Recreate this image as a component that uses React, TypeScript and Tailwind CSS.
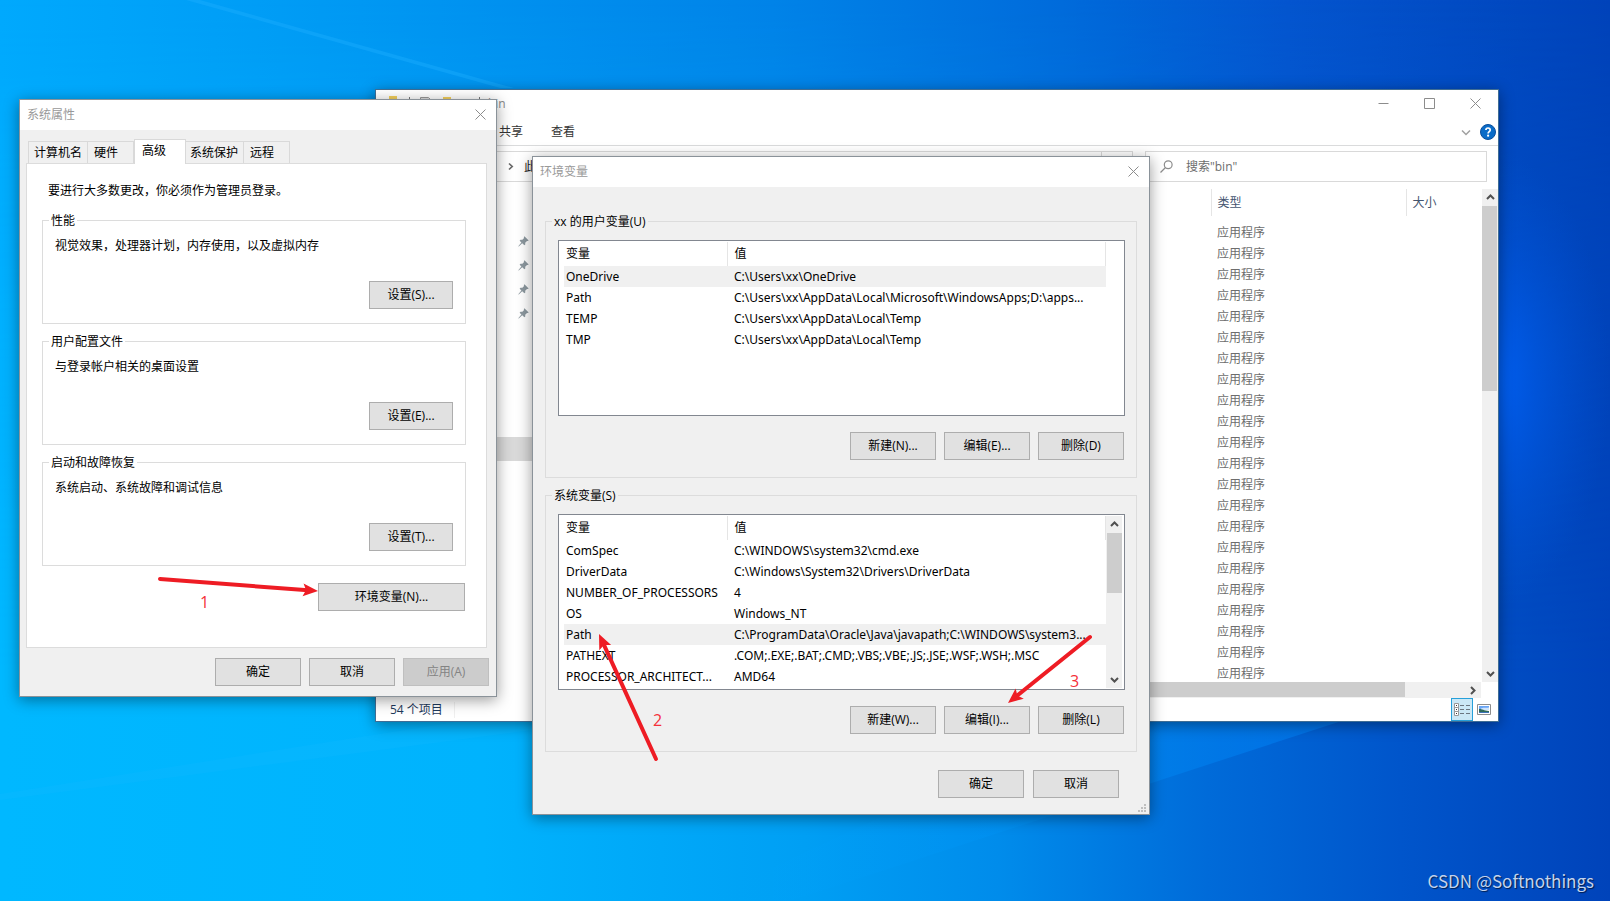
import type { ReactNode } from "react";

const fileRows = Array.from({ length: 22 }, (_, i) => i);

const userVars: [string, string][] = [
  ["OneDrive", "C:\\Users\\xx\\OneDrive"],
  ["Path", "C:\\Users\\xx\\AppData\\Local\\Microsoft\\WindowsApps;D:\\apps..."],
  ["TEMP", "C:\\Users\\xx\\AppData\\Local\\Temp"],
  ["TMP", "C:\\Users\\xx\\AppData\\Local\\Temp"],
];

const systemVars: [string, string][] = [
  ["ComSpec", "C:\\WINDOWS\\system32\\cmd.exe"],
  ["DriverData", "C:\\Windows\\System32\\Drivers\\DriverData"],
  ["NUMBER_OF_PROCESSORS", "4"],
  ["OS", "Windows_NT"],
  ["Path", "C:\\ProgramData\\Oracle\\Java\\javapath;C:\\WINDOWS\\system3..."],
  ["PATHEXT", ".COM;.EXE;.BAT;.CMD;.VBS;.VBE;.JS;.JSE;.WSF;.WSH;.MSC"],
  ["PROCESSOR_ARCHITECT...", "AMD64"],
];

function Wallpaper() {
  return (
    <svg className="absolute inset-0 h-full w-full" viewBox="0 0 1610 901" preserveAspectRatio="none" aria-hidden="true">
      <defs>
        <linearGradient id="top" x1="0" x2="1" y1="0" y2="0">
          <stop offset="0" stopColor="#00a9fd" />
          <stop offset="0.2" stopColor="#009af4" />
          <stop offset="0.48" stopColor="#0083e8" />
          <stop offset="0.66" stopColor="#006bdb" />
          <stop offset="0.8" stopColor="#0455cf" />
          <stop offset="1" stopColor="#0043ba" />
        </linearGradient>
        <linearGradient id="bottom" x1="0" x2="1" y1="0" y2="0">
          <stop offset="0" stopColor="#00b8ff" />
          <stop offset="0.3" stopColor="#00b3fd" />
          <stop offset="0.5" stopColor="#009ff4" />
          <stop offset="0.62" stopColor="#008ceb" />
          <stop offset="0.75" stopColor="#006bd9" />
          <stop offset="0.87" stopColor="#0055cb" />
          <stop offset="1" stopColor="#0043ba" />
        </linearGradient>
        <linearGradient id="fade" x1="0" x2="0" y1="0" y2="1">
          <stop offset="0" stopColor="#000" />
          <stop offset="0.75" stopColor="#fff" />
        </linearGradient>
        <mask id="lower">
          <rect width="1610" height="901" fill="url(#fade)" />
        </mask>
        <radialGradient id="glow" cx="0" cy="0" r="1" gradientUnits="userSpaceOnUse" gradientTransform="translate(1490 380) scale(120 230)">
          <stop offset="0" stopColor="#0060f4" />
          <stop offset="1" stopColor="#0052d6" stopOpacity="0" />
        </radialGradient>
        <linearGradient id="beam" x1="0" x2="1" y1="0" y2="0">
          <stop offset="0" stopColor="#00a8ff" stopOpacity="0" />
          <stop offset="1" stopColor="#0088ff" stopOpacity="0.45" />
        </linearGradient>
      </defs>
      <rect width="1610" height="901" fill="url(#top)" />
      <rect width="1610" height="901" fill="url(#bottom)" mask="url(#lower)" />
      <rect width="1610" height="901" fill="url(#glow)" />
      <path d="M186 0 L500 88 L514 88 L200 0 Z" fill="#1fb0ff" opacity="0.4" />
      <path d="M0 800 L540 729 L540 715 L500 715 L0 794 Z" fill="#20bdff" opacity="0.15" />
      <path d="M790 901 L1360 715 L1100 715 L700 901 Z" fill="url(#beam)" />
    </svg>
  );
}

function CloseGlyph() {
  return (
    <svg className="h-[11px] w-[11px]" viewBox="0 0 11 11" stroke="#8c8c8c" strokeWidth="1" fill="none" aria-hidden="true">
      <path d="M0.5 0.5 L10.5 10.5 M10.5 0.5 L0.5 10.5" />
    </svg>
  );
}

function Chevron({ direction }: { direction: "up" | "down" | "right" }) {
  const paths = {
    up: "M1 6 L4.5 2.5 L8 6",
    down: "M1 3 L4.5 6.5 L8 3",
    right: "M3 1 L6.5 4.5 L3 8",
  };
  return (
    <svg className="h-[9px] w-[9px]" viewBox="0 0 9 9" fill="none" stroke="#505050" strokeWidth="2" aria-hidden="true">
      <path d={paths[direction]} />
    </svg>
  );
}

function PushButton({ children, wide, disabled }: { children: ReactNode; wide?: "sm" | "lg"; disabled?: boolean }) {
  const width = wide === "lg" ? "w-[147px]" : wide === "sm" ? "w-[84px]" : "w-[86px]";
  const tone = disabled ? "border-[#bfbfbf] bg-[#cccccc] text-[#838383]" : "border-[#adadad] bg-[#e1e1e1] text-black";
  return (
    <button type="button" disabled={disabled} className={`h-7 shrink-0 border ${width} ${tone}`}>
      {children}
    </button>
  );
}

function TitleBar({ title }: { title: string }) {
  return (
    <header className="flex h-[30px] items-center justify-between bg-white pr-[10px] pl-[7px] text-[#999999]">
      <h2>{title}</h2>
      <button type="button" aria-label="关闭" className="pb-px">
        <CloseGlyph />
      </button>
    </header>
  );
}

function SettingsGroup({ title, text, action }: { title: string; text: string; action: string }) {
  return (
    <fieldset className="border border-[#dcdcdc] pr-3 pb-[14px] pl-3">
      <legend className="-ml-[6px] px-[2px] pt-[2px]">{title}</legend>
      <p className="pt-[9px]">{text}</p>
      <div className="mt-[27px] flex justify-end">
        <PushButton wide="sm">{action}</PushButton>
      </div>
    </fieldset>
  );
}

function Tab({ label, className }: { label: string; className: string }) {
  return (
    <button type="button" role="tab" className={`h-[22px] border border-b-0 border-[#d9d9d9] bg-[#f0f0f0] text-left ${className}`}>
      {label}
    </button>
  );
}

function SystemProperties() {
  return (
    <section className="absolute top-[99px] left-[19px] w-[478px] border border-[#8a9299] bg-[#f0f0f0] shadow-[0_3px_14px_rgba(0,0,0,0.4)]">
      <TitleBar title="系统属性" />
      <div className="pt-[9px] pr-[9px] pb-[10px] pl-[6px]">
        <div role="tablist" className="flex items-end pl-[2px]">
          <Tab label="计算机名" className="w-[60px] pl-[5px]" />
          <Tab label="硬件" className="-ml-px w-[47px] pl-[6px]" />
          <button
            type="button"
            role="tab"
            aria-selected="true"
            className="relative -mb-px h-[25px] w-[52px] border border-b-0 border-[#d9d9d9] bg-white pb-[3px] pl-[7px] text-left"
          >
            高级
          </button>
          <Tab label="系统保护" className="-ml-px w-[59px] pl-[4px]" />
          <Tab label="远程" className="-ml-px w-[47px] pl-[6px]" />
        </div>
        <div role="tabpanel" className="border border-[#dcdcdc] bg-white pt-[19px] pr-5 pb-9 pl-[15px]">
          <p className="pl-[6px]">要进行大多数更改，你必须作为管理员登录。</p>
          <div className="mt-3 flex flex-col gap-2">
            <SettingsGroup title="性能" text="视觉效果，处理器计划，内存使用，以及虚拟内存" action="设置(S)..." />
            <SettingsGroup title="用户配置文件" text="与登录帐户相关的桌面设置" action="设置(E)..." />
            <SettingsGroup title="启动和故障恢复" text="系统启动、系统故障和调试信息" action="设置(T)..." />
          </div>
          <div className="mt-[17px] mr-px flex justify-end">
            <PushButton wide="lg">环境变量(N)...</PushButton>
          </div>
        </div>
        <footer className="-mr-[2px] mt-[10px] flex justify-end gap-2">
          <PushButton>确定</PushButton>
          <PushButton>取消</PushButton>
          <PushButton disabled>应用(A)</PushButton>
        </footer>
      </div>
    </section>
  );
}

function VariableTable({ rows, selected, scroll }: { rows: [string, string][]; selected: number; scroll?: boolean }) {
  return (
    <div className="flex h-[176px] justify-between border border-[#828790] bg-white pt-px pr-[2px] pl-[5px]">
      <table className="w-[542px] shrink-0 table-fixed self-start text-left font-['Noto_Sans','Noto_Sans_CJK_SC',sans-serif]">
        <colgroup>
          <col className="w-[163px]" />
          <col />
        </colgroup>
        <thead>
          <tr className="h-6">
            <th className="border-r border-[#e5e5e5] pl-[2px] font-normal">变量</th>
            <th className="border-r border-[#e5e5e5] pl-[7px] font-normal">值</th>
          </tr>
        </thead>
        <tbody>
          {rows.map(([name, value], i) => (
            <tr key={name} className={i === selected ? "h-[21px] bg-[#f0f0f0]" : "h-[21px]"}>
              <td className="p-0 pl-[2px] whitespace-nowrap">{name}</td>
              <td className="p-0 pl-[7px] whitespace-nowrap">{value}</td>
            </tr>
          ))}
        </tbody>
      </table>
      {scroll && (
        <div className="mb-px flex w-4 flex-col items-center bg-[#f0f0f0]">
          <div className="flex h-[17px] items-center">
            <Chevron direction="up" />
          </div>
          <div className="h-[60px] w-[15px] self-end bg-[#cdcdcd]" />
          <div className="mt-auto flex h-[17px] items-center">
            <Chevron direction="down" />
          </div>
        </div>
      )}
    </div>
  );
}

function VariableGroup({
  title,
  rows,
  selected,
  scroll,
  actions,
}: {
  title: string;
  rows: [string, string][];
  selected: number;
  scroll?: boolean;
  actions: string[];
}) {
  return (
    <fieldset className="border border-[#dcdcdc] pr-[11px] pb-[17px] pl-3">
      <legend className="-ml-[6px] px-[2px] pt-[2px]">{title}</legend>
      <div className="pt-[10px]">
        <VariableTable rows={rows} selected={selected} scroll={scroll} />
      </div>
      <div className="mt-4 mr-px flex justify-end gap-2">
        {actions.map((a) => (
          <PushButton key={a}>{a}</PushButton>
        ))}
      </div>
    </fieldset>
  );
}

function EnvironmentVariables() {
  return (
    <section className="absolute top-[156px] left-[532px] w-[618px] border border-[#8a9299] bg-[#f0f0f0] shadow-[0_3px_14px_rgba(0,0,0,0.4)]">
      <TitleBar title="环境变量" />
      <div className="px-3 pt-[25px] pb-4">
        <div className="flex flex-col gap-2">
          <VariableGroup title="xx 的用户变量(U)" rows={userVars} selected={0} actions={["新建(N)...", "编辑(E)...", "删除(D)"]} />
          <VariableGroup title="系统变量(S)" rows={systemVars} selected={4} scroll actions={["新建(W)...", "编辑(I)...", "删除(L)"]} />
        </div>
        <footer className="mt-[18px] mr-[18px] flex justify-end gap-[9px]">
          <PushButton>确定</PushButton>
          <PushButton>取消</PushButton>
        </footer>
      </div>
      <svg className="absolute right-[3px] bottom-[2px] h-2 w-2" viewBox="0 0 8 8" fill="#bfbfbf" aria-hidden="true">
        <path d="M6 0h2v2H6z M3 3h2v2H3z M6 3h2v2H6z M0 6h2v2H0z M3 6h2v2H3z M6 6h2v2H6z" />
      </svg>
    </section>
  );
}

function Pin() {
  return (
    <svg className="h-[11px] w-[11px]" viewBox="0 0 11 11" aria-hidden="true">
      <path d="M6.4 0.3 L10.7 4.4 L9.6 5.1 L9 4.9 L7.2 6.7 L7.3 8.4 L6.4 9.3 L4.2 7.2 L0.8 10.6 L0.3 10.3 L3.4 6.5 L1.6 4.7 L2.5 3.8 L4.4 3.8 L6.1 2 L5.8 1.2 Z" fill="#8c989f" />
    </svg>
  );
}

function Explorer() {
  return (
    <section className="absolute top-[89px] left-[375px] flex w-[1124px] flex-col border border-[#3f6d94] bg-white text-[#6d6d6d] shadow-[0_3px_14px_rgba(0,0,0,0.4)]">
      <header className="flex h-[27px] items-center justify-between pr-[17px] pl-[13px]">
        <div className="flex items-center text-[#888888]">
          <svg className="h-4 w-[92px]" viewBox="0 0 92 16" aria-hidden="true">
            <path d="M0 0h8v14H0z" fill="#f3cf5c" />
            <path d="M20.5 1v13" stroke="#777" />
            <path d="M31.5 1.5h8l3 3v10h-11z" fill="#ddd" stroke="#999" />
            <path d="M54 1h8v13h-8z" fill="#f3cf5c" />
            <path d="M90.5 1v13" stroke="#777" />
          </svg>
          <span className="pl-[7px]">bin</span>
        </div>
        <div className="flex items-center gap-[35px]">
          <button type="button" aria-label="最小化">
            <svg className="h-[11px] w-[11px]" viewBox="0 0 11 11" stroke="#8c8c8c" aria-hidden="true">
              <path d="M0.5 5.5h10" />
            </svg>
          </button>
          <button type="button" aria-label="最大化">
            <svg className="h-[11px] w-[11px]" viewBox="0 0 11 11" stroke="#8c8c8c" fill="none" aria-hidden="true">
              <path d="M0.5 0.5h10v10h-10z" />
            </svg>
          </button>
          <button type="button" aria-label="关闭">
            <CloseGlyph />
          </button>
        </div>
      </header>
      <nav className="flex h-[29px] items-center border-b border-[#dadbdc] pt-[2px] pr-[2px] pl-[123px] text-[#333333]">
        <a href="#share">共享</a>
        <a href="#view" className="pl-7">
          查看
        </a>
        <svg className="mr-[9px] ml-auto h-[9px] w-[10px]" viewBox="0 0 10 9" fill="none" stroke="#a0a0a0" strokeWidth="1.5" aria-hidden="true">
          <path d="M1 2.5 L5 6.5 L9 2.5" />
        </svg>
        <button type="button" aria-label="帮助">
          <svg className="h-4 w-4" viewBox="0 0 16 16" aria-hidden="true">
            <circle cx="8" cy="8" r="7.5" fill="#0a6cc8" stroke="#0b4f9c" />
            <path d="M5.9 6.1 C5.9 3.3 10.2 3.3 10.2 6 C10.2 7.6 8.1 7.7 8.1 9.5" fill="none" stroke="#fff" strokeWidth="1.7" />
            <circle cx="8.1" cy="11.7" r="1.1" fill="#fff" />
          </svg>
        </button>
      </nav>
      <div className="flex h-[43px] items-start pt-[5px] pr-[11px]">
        <div className="ml-20 flex h-[31px] flex-1 items-center border border-[#d9d9d9]">
          <svg className="ml-[51px] h-[9px] w-[6px]" viewBox="0 0 6 9" fill="none" stroke="#6a6a6a" strokeWidth="1.7" aria-hidden="true">
            <path d="M1 1.5 L4.2 4.5 L1 7.5" />
          </svg>
          <span className="pl-[10px] text-[#222222]">此</span>
          <span className="mr-[30px] ml-auto h-full w-px bg-[#d9d9d9]" />
        </div>
        <label className="ml-3 flex h-[31px] w-[342px] items-center border border-[#d9d9d9] pl-[14px]">
          <svg className="h-[13px] w-[13px]" viewBox="0 0 13 13" fill="none" stroke="#8c8c8c" strokeWidth="1.2" aria-hidden="true">
            <circle cx="8.2" cy="4.7" r="3.9" />
            <path d="M5.5 7.5 L0.5 12.5" />
          </svg>
          <input aria-label="搜索" placeholder={'搜索"bin"'} className="ml-[13px] min-w-0 flex-1 outline-none placeholder:text-[#6d6d6d]" />
        </label>
      </div>
      <div className="flex">
        <aside className="w-[157px] shrink-0 pt-[47px]">
          <div className="flex flex-col items-end gap-[13px] pr-[4px]">
            <Pin />
            <Pin />
            <Pin />
            <Pin />
          </div>
          <div className="mt-[118px] h-6 bg-[#d9d9d9]" />
        </aside>
        <div className="flex h-[509px] min-w-0 flex-1 flex-col">
          <div className="flex h-[493px] justify-between">
            <table className="table-fixed self-start text-left">
              <colgroup>
                <col className="w-[678px]" />
                <col className="w-[195px]" />
                <col className="w-[74px]" />
              </colgroup>
              <thead>
                <tr className="h-[27px] text-[#44546f]">
                  <th className="border-r border-[#e5e5e5]" />
                  <th className="border-r border-[#e5e5e5] pl-[6px] font-normal">类型</th>
                  <th className="pl-[6px] font-normal">大小</th>
                </tr>
                <tr className="h-[6px]" />
              </thead>
              <tbody>
                {fileRows.map((i) => (
                  <tr key={i} className="h-[21px]">
                    <td />
                    <td className="pl-[6px]">应用程序</td>
                    <td />
                  </tr>
                ))}
              </tbody>
            </table>
            <div className="flex w-4 flex-col items-center bg-[#f0f0f0]">
              <div className="flex h-[17px] items-center">
                <Chevron direction="up" />
              </div>
              <div className="h-[185px] w-[15px] self-start bg-[#cdcdcd]" />
              <div className="mt-auto flex h-[17px] items-center">
                <Chevron direction="down" />
              </div>
            </div>
          </div>
          <div className="mr-[17px] flex h-4 items-center bg-[#f0f0f0]">
            <div className="h-[15px] flex-1 self-start bg-[#cdcdcd]" />
            <div className="flex w-[76px] justify-end pr-1">
              <Chevron direction="right" />
            </div>
          </div>
        </div>
      </div>
      <footer className="flex h-[23px] items-center pr-[7px] pl-[14px] text-[#1e395b]">
        <span className="border-r border-[#f0f0f0] pr-[11px]">54 个项目</span>
        <button type="button" aria-label="详细信息" className="ml-auto flex h-full w-[22px] items-center justify-center border border-[#26a0da] bg-[#cbe8f6]">
          <svg className="h-[13px] w-4" viewBox="0 0 16 13" fill="none" aria-hidden="true">
            <path d="M0.5 0.5h4v4h-4z M0.5 4.5h4v4h-4z M0.5 8.5h4v4h-4z" fill="#fff" stroke="#999" />
            <path d="M2 2h1v1H2z M2 6h1v1H2z M2 10h1v1H2z" fill="#333" />
            <path d="M6 2.5h4 M12 2.5h4 M6 6.5h4 M12 6.5h4 M6 10.5h4 M12 10.5h4" stroke="#6b7680" />
          </svg>
        </button>
        <button type="button" aria-label="大图标" className="ml-1">
          <svg className="h-[11px] w-[14px]" viewBox="0 0 14 11" aria-hidden="true">
            <path d="M0.5 0.5h13v10h-13z" fill="#fff" stroke="#8d8d8d" />
            <path d="M2 2h10v4H2z" fill="#6aa5f5" />
            <path d="M4 4.5 C6 3 8 4 12 3.5 V6 H4z" fill="#cfe4fb" />
            <path d="M2 5 C5 5 7 6.5 12 7 V9 H2z" fill="#2f6a5a" />
            <path d="M2 8h10v1H2z" fill="#3f74b8" />
          </svg>
        </button>
      </footer>
    </section>
  );
}

function Arrow({ x1, y1, x2, y2 }: { x1: number; y1: number; x2: number; y2: number }) {
  const length = Math.hypot(x2 - x1, y2 - y1);
  const angle = (Math.atan2(y2 - y1, x2 - x1) * 180) / Math.PI;
  return (
    <g transform={`translate(${x2} ${y2}) rotate(${angle})`}>
      <path d={`M${-length} 0 H-10`} stroke="#ee1c24" strokeWidth="4" strokeLinecap="round" />
      <path d="M0 0 L-15 -6.5 L-12 0 L-15 6.5 Z" fill="#ee1c24" />
    </g>
  );
}

function Annotations() {
  return (
    <div className="pointer-events-none absolute inset-0 font-['Open_Sans',sans-serif] text-base leading-5 text-[#f5303a]">
      <svg className="absolute top-0 left-0 h-[901px] w-[1610px]" viewBox="0 0 1610 901" fill="none" aria-hidden="true">
        <Arrow x1={160} y1={579} x2={318} y2={591} />
        <Arrow x1={656} y1={759} x2={599} y2={634} />
        <Arrow x1={1090} y1={637} x2={1008} y2={703} />
      </svg>
      <span className="absolute top-[592px] left-[200px]">1</span>
      <span className="absolute top-[710px] left-[653px]">2</span>
      <span className="absolute top-[671px] left-[1070px]">3</span>
    </div>
  );
}

export default function App() {
  return (
    <main className="relative min-h-screen overflow-hidden bg-[#008ceb] font-['Open_Sans','Noto_Sans_CJK_SC',sans-serif] text-xs leading-4 text-black">
      <Wallpaper />
      <Explorer />
      <SystemProperties />
      <EnvironmentVariables />
      <Annotations />
      <p className="absolute right-4 bottom-2 font-['Noto_Sans_CJK_SC',sans-serif] text-[17px] leading-6 text-[#c3d3ec] [text-shadow:1px_1px_1px_rgba(0,0,0,0.6)]">
        CSDN @Softnothings
      </p>
    </main>
  );
}
